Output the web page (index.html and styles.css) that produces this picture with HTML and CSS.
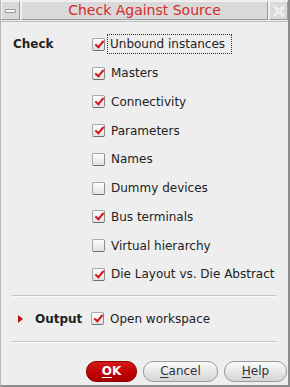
FILE: index.html
```html
<!DOCTYPE html>
<html>
<head>
<meta charset="utf-8">
<link rel="stylesheet" href="styles.css">
</head>
<body>
<div class="window">
  <div class="titlebar">
    <div class="tb-btn"><span class="minbar"></span></div>
    <div class="tb-title">Check Against Source</div>
    <div class="tb-btn">
      <svg width="14" height="14" viewBox="0 0 14 14"><path d="M2 2 L12 12 M12 2 L2 12" stroke="#f4f4f4" stroke-width="3" fill="none"/><path d="M2 2 L12 12 M12 2 L2 12" stroke="#cfcfcf" stroke-width="1" fill="none" stroke-dasharray="1 1"/></svg>
    </div>
  </div>
  <div class="content">
    <div class="section">
      <div class="label">Check</div>
      <div class="options">
        <div class="row"><span class="cb on"></span><span class="text focus">Unbound instances</span></div>
        <div class="row"><span class="cb on"></span><span class="text">Masters</span></div>
        <div class="row"><span class="cb on"></span><span class="text">Connectivity</span></div>
        <div class="row"><span class="cb on"></span><span class="text">Parameters</span></div>
        <div class="row"><span class="cb"></span><span class="text">Names</span></div>
        <div class="row"><span class="cb"></span><span class="text">Dummy devices</span></div>
        <div class="row"><span class="cb on"></span><span class="text">Bus terminals</span></div>
        <div class="row"><span class="cb"></span><span class="text">Virtual hierarchy</span></div>
        <div class="row"><span class="cb on"></span><span class="text">Die Layout vs. Die Abstract</span></div>
      </div>
    </div>
    <div class="sep sep1"></div>
    <div class="output">
      <div class="label out-label"><span class="tri"></span>Output</div>
      <div class="row"><span class="cb on"></span><span class="text">Open workspace</span></div>
    </div>
    <div class="sep sep2"></div>
    <div class="buttons">
      <button class="btn ok"><u>O</u>K</button>
      <button class="btn cancel"><u>C</u>ancel</button>
      <button class="btn help"><u>H</u>elp</button>
    </div>
  </div>
</div>
</body>
</html>
```
FILE: styles.css
```css
html, body {
  margin: 0;
  padding: 0;
  background: #ededed;
}
body {
  font-family: "DejaVu Sans", "Liberation Sans", sans-serif;
  font-size: 12px;
  color: #222;
}
.window {
  width: 290px;
  height: 387px;
  box-sizing: border-box;
  background: #eeeeee;
  border-left: 1px solid #b8b8b8;
  border-right: 2px solid #8c8c8c;
  border-bottom: 2px solid #8c8c8c;
  display: flex;
  flex-direction: column;
}
.titlebar {
  display: flex;
  height: 20px;
  gap: 1px;
  padding: 1px 0 0 0;
  background: #ececec;
  border-bottom: 1px solid #bdbdbd;
}
.tb-btn {
  width: 19px;
  height: 19px;
  box-sizing: border-box;
  background: #d9d9d9;
  border-top: 1px solid #f2f2f2;
  border-left: 1px solid #f2f2f2;
  border-right: 1px solid #9a9a9a;
  border-bottom: 1px solid #9a9a9a;
  display: flex;
  align-items: center;
  justify-content: center;
}
.minbar {
  width: 11px;
  height: 4px;
  box-sizing: border-box;
  background: #f7f7f7;
  border: 1px solid #9a9a9a;
  border-radius: 1px;
}
.tb-title {
  flex: 1;
  height: 19px;
  box-sizing: border-box;
  background: #d9d9d9;
  border-top: 1px solid #f2f2f2;
  border-left: 1px solid #f2f2f2;
  border-right: 1px solid #9a9a9a;
  border-bottom: 1px solid #9a9a9a;
  color: #d42a2a;
  font-size: 14px;
  line-height: 17px;
  text-align: center;
}
.content {
  flex: 1;
  display: flex;
  flex-direction: column;
  padding: 8px 11px 0 11px;
}
.section {
  display: flex;
}
.label {
  width: 79px;
  font-weight: bold;
  font-size: 12px;
  height: 28.75px;
  line-height: 28.75px;
  padding-left: 1px;
}
.options {
  display: flex;
  flex-direction: column;
}
.row {
  display: flex;
  align-items: center;
  height: 28.75px;
}
.cb {
  width: 13px;
  height: 13px;
  box-sizing: border-box;
  border: 1px solid #a8a8a8;
  border-bottom-color: #6e6e6e;
  border-right-color: #8a8a8a;
  border-radius: 2px;
  background: linear-gradient(#fdfdfd, #e2e2e2);
  margin-right: 6px;
  position: relative;
}
.cb.on::after {
  content: "";
  position: absolute;
  left: 4px;
  top: 0px;
  width: 3px;
  height: 7px;
  border-right: 2.5px solid #d4141c;
  border-bottom: 2.5px solid #d4141c;
  transform: rotate(40deg);
}
.text {
  white-space: nowrap;
}
.text.focus {
  outline: 1px dotted #333;
  outline-offset: 0;
  padding: 2px 6px 2px 2px;
  margin-left: -3px;
}
.sep {
  height: 0;
  border-top: 1px solid #c6c6c6;
  border-bottom: 1px solid #fafafa;
  margin-right: 1px;
}
.sep1 {
  margin-top: 6px;
}
.output {
  display: flex;
  align-items: center;
  height: 44px;
}
.out-label {
  display: flex;
  align-items: center;
  height: 44px;
  line-height: normal;
  padding-left: 0;
}
.tri {
  width: 0;
  height: 0;
  border-top: 4px solid transparent;
  border-bottom: 4px solid transparent;
  border-left: 5px solid #c01010;
  margin-left: 6px;
  margin-right: 12px;
}
.buttons {
  display: flex;
  justify-content: flex-end;
  gap: 6px;
  margin-top: 18px;
  margin-right: -10px;
}
.btn {
  height: 21px;
  box-sizing: border-box;
  font-family: "DejaVu Sans", "Liberation Sans", sans-serif;
  font-size: 12px;
  border-radius: 10px;
  padding: 0;
  color: #333;
  border: 1px solid #9a9a9a;
  background: linear-gradient(#fbfbfb, #e4e4e4 60%, #d4d4d4);
}
.btn u {
  text-decoration-thickness: 1px;
  text-underline-offset: 2px;
}
.ok {
  width: 51px;
  background: linear-gradient(#d41818, #c00000 60%, #a80000);
  border-color: #8a0000;
  color: #fff;
  font-weight: bold;
}
.cancel {
  width: 75px;
}
.help {
  width: 63px;
}
```
